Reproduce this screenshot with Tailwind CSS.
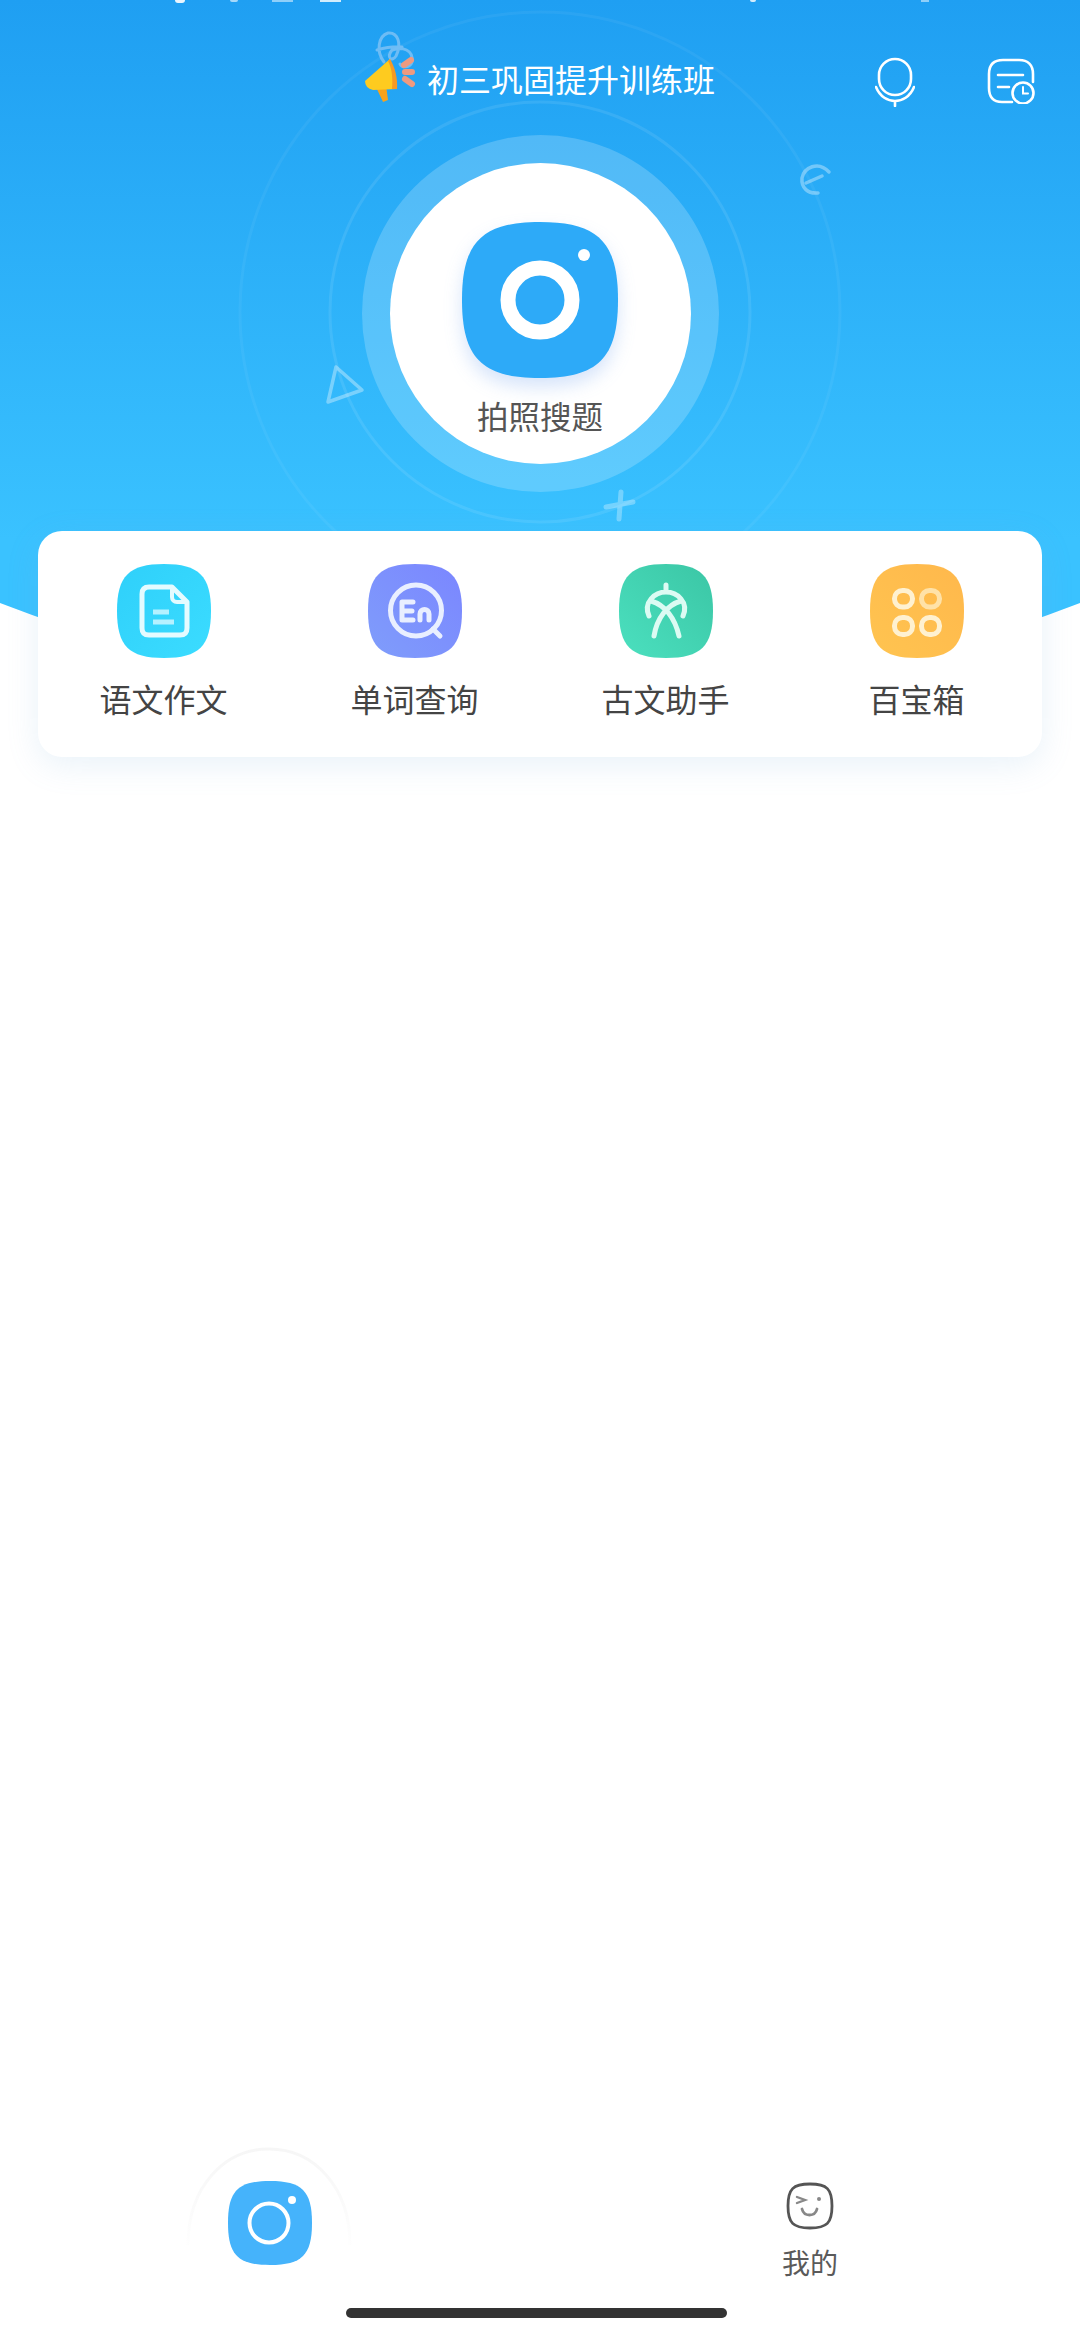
<!DOCTYPE html>
<html lang="zh-CN">
<head>
    <meta charset="UTF-8">
    <meta name="viewport" content="width=device-width, initial-scale=1.0">
    <title>拍照搜题</title>
    <script src="https://cdn.jsdelivr.net/npm/@tailwindcss/browser@4"></script>
</head>
<body class="bg-white font-['Noto_Sans_CJK_SC','Noto_Sans',sans-serif]">
<div class="relative w-[1080px] h-[2337px] overflow-hidden bg-white flex flex-col">

    <!-- Hero background + decorations -->
    <svg class="absolute left-0 top-0" width="1080" height="720" viewBox="0 0 1080 720" fill="none">
        <defs>
            <linearGradient id="hero" gradientUnits="userSpaceOnUse" x1="0" y1="0" x2="0" y2="540">
                <stop offset="0" stop-color="#1f9ff2"/>
                <stop offset="1" stop-color="#3ac2ff"/>
            </linearGradient>
        </defs>
        <path d="M0 0H1080V603Q540 811 0 603Z" fill="url(#hero)"/>
        <circle cx="540" cy="312" r="210" stroke="#fff" stroke-opacity=".09" stroke-width="3"/>
        <circle cx="540" cy="312" r="300" stroke="#fff" stroke-opacity=".05" stroke-width="3"/>
        <path d="M336 367L362 390 328 402Z" stroke="#fff" stroke-opacity=".35" stroke-width="3.5" stroke-linejoin="round"/>
        <path d="M829 172C818 160 804 168 802 178 801 188 808 194 818 193M806 183L822 176" stroke="#fff" stroke-opacity=".35" stroke-width="3.5" stroke-linecap="round"/>
        <path d="M621 492L619 519M606 507L633 502" stroke="#fff" stroke-opacity=".3" stroke-width="5" stroke-linecap="round"/>
        <path d="M384 62C376 52 378 36 388 33 398 32 402 44 396 56 392 62 386 58 392 50 402 46 414 50 412 62 410 68 402 68 400 64M377 50C384 48 392 46 402 47" stroke="#8fc7f5" stroke-opacity=".7" stroke-width="3" stroke-linecap="round"/>
    </svg>

    <!-- Status bar remnants, cut by the top edge -->
    <div class="relative h-[4px] flex items-start">
        <span class="absolute left-[175px] top-0 w-[10px] h-[3px] rounded-b-full bg-white/90"></span>
        <span class="absolute left-[230px] top-0 w-[8px] h-[2px] rounded-b-full bg-white/60"></span>
        <span class="absolute left-[272px] top-0 w-[21px] h-[2px] bg-white/50"></span>
        <span class="absolute left-[320px] top-0 w-[21px] h-[2px] bg-white/80"></span>
        <span class="absolute left-[750px] top-0 w-[6px] h-[2px] rounded-b-full bg-white/80"></span>
        <span class="absolute left-[921px] top-0 w-[8px] h-[2px] bg-white/50"></span>
    </div>

    <!-- Header -->
    <header class="relative h-[152px] pl-[365px] pr-[45px] pb-[4px] flex items-center text-white">
        <svg class="w-[52px] h-[46px] mt-[4px]" viewBox="0 0 52 46" fill="none">
            <path d="M11 30L18 45 23 43 21 28Z" fill="#f6a21e"/>
            <path d="M0 24L25 2 32 32 8 33Q0 31 0 24Z" fill="#fecb1f"/>
            <path d="M25 2C30 10 33 22 32 32L27 32C28 22 27 11 23 4Z" fill="#f59a23"/>
            <path d="M39 8L46 3M40 15L47 15M40 22L47 27" stroke="#ee9a80" stroke-width="6" stroke-linecap="round"/>
        </svg>
        <span class="ml-[10px] text-[32px] leading-[44px]">初三巩固提升训练班</span>
        <svg class="ml-auto mt-[8px] w-[40px] h-[50px]" viewBox="0 0 40 50" fill="none" stroke="#fff" stroke-width="2.6" stroke-linecap="round">
            <rect x="4" y="2" width="32" height="36" rx="16"/>
            <path d="M1 30C5 40 13 44 20 44 27 44 35 40 39 30M20 44V49"/>
        </svg>
        <svg class="ml-[72px] mt-[5px] w-[48px] h-[46px]" viewBox="0 0 48 46" fill="none" stroke="#fff" stroke-width="2.6" stroke-linecap="round">
            <path d="M25 44H15C6 44 2 39 2 30V16C2 6 7 2 16 2H32C41 2 46 7 46 16V24"/>
            <path d="M11 17H36M11 29H22"/>
            <circle cx="36" cy="35" r="10.5"/>
            <path d="M36 29V35.5H41" stroke-width="2"/>
        </svg>
    </header>

    <!-- Camera button -->
    <section class="relative flex justify-center">
        <div class="mt-[7px] w-[301px] h-[301px] rounded-full bg-white ring-[28px] ring-white/20 flex flex-col items-center">
            <svg class="mt-[59px] w-[156px] h-[156px] drop-shadow-[0_9px_9px_rgba(70,130,230,0.22)]" viewBox="0 0 156 156">
                <path d="M78 0C136 0 156 20 156 78S136 156 78 156 0 136 0 78 20 0 78 0Z" fill="#2daaf8"/>
                <circle cx="78" cy="78" r="32" fill="none" stroke="#fff" stroke-width="15"/>
                <circle cx="122" cy="33" r="6" fill="#fff"/>
            </svg>
            <span class="mt-[15px] text-[31.5px] leading-[44px] text-[#555]">拍照搜题</span>
        </div>
    </section>

    <!-- Tool card -->
    <section class="relative mt-[67px] mx-[38px] h-[226px] rounded-[24px] bg-white shadow-[0_8px_32px_rgba(120,175,215,0.16)] grid grid-cols-4 text-[32px] leading-[44px] text-[#444]">
        <div class="flex flex-col items-center pt-[33px]">
            <svg class="w-[94px] h-[94px]" viewBox="0 0 94 94" fill="none">
                <defs><linearGradient id="g1" x1="0" y1="0" x2="1" y2="1"><stop offset="0" stop-color="#2fd0fa"/><stop offset="1" stop-color="#3bdcff"/></linearGradient></defs>
                <path d="M47 0C82 0 94 12 94 47S82 94 47 94 0 82 0 47 12 0 47 0Z" fill="url(#g1)"/>
                <path d="M55 23H32C27 23 25 26 25 30V64C25 69 27 71 32 71H63C68 71 70 69 70 64V38Z" stroke="#e4fbff" stroke-width="5" stroke-linejoin="round"/>
                <path d="M55 23V33C55 36 57 38 60 38H70" stroke="#e4fbff" stroke-width="4" stroke-linejoin="round"/>
                <path d="M36 48H52M36 58H57" stroke="#b5f1ff" stroke-width="5"/>
            </svg>
            <span class="mt-[18px]">语文作文</span>
        </div>
        <div class="flex flex-col items-center pt-[33px]">
            <svg class="w-[94px] h-[94px]" viewBox="0 0 94 94" fill="none">
                <defs><linearGradient id="g2" x1="0" y1="1" x2="1" y2="0"><stop offset="0" stop-color="#7f9dfb"/><stop offset="1" stop-color="#7b86ff"/></linearGradient></defs>
                <path d="M47 0C82 0 94 12 94 47S82 94 47 94 0 82 0 47 12 0 47 0Z" fill="url(#g2)"/>
                <circle cx="48" cy="46.5" r="25.5" stroke="#e9efff" stroke-width="5"/>
                <path d="M65 65L72 72" stroke="#e9efff" stroke-width="5" stroke-linecap="round"/>
                <path d="M45 38H34V56H45M34 47H44" stroke="#e9efff" stroke-width="5" stroke-linecap="round" stroke-linejoin="round"/>
                <path d="M52 56V50C52 44 61 44 61 50V56" stroke="#e9efff" stroke-width="5" stroke-linecap="round"/>
            </svg>
            <span class="mt-[18px]">单词查询</span>
        </div>
        <div class="flex flex-col items-center pt-[33px]">
            <svg class="w-[94px] h-[94px]" viewBox="0 0 94 94" fill="none">
                <defs><linearGradient id="g3" x1="0" y1="1" x2="1" y2="0"><stop offset="0" stop-color="#4be0bf"/><stop offset="1" stop-color="#3bc6a5"/></linearGradient></defs>
                <path d="M47 0C82 0 94 12 94 47S82 94 47 94 0 82 0 47 12 0 47 0Z" fill="url(#g3)"/>
                <g stroke="#dcfbf3" stroke-width="5" stroke-linecap="round">
                    <path d="M47 21V28M30 52C24 38 36 28 47 28 58 28 70 38 64 52"/>
                    <path d="M32 37C46 41 56 54 60 72M62 37C48 41 38 54 35 72"/>
                </g>
            </svg>
            <span class="mt-[18px]">古文助手</span>
        </div>
        <div class="flex flex-col items-center pt-[33px]">
            <svg class="w-[94px] h-[94px]" viewBox="0 0 94 94" fill="none">
                <defs><linearGradient id="g4" x1="0" y1="1" x2="1" y2="0"><stop offset="0" stop-color="#ffc450"/><stop offset="1" stop-color="#ffb84c"/></linearGradient></defs>
                <path d="M47 0C82 0 94 12 94 47S82 94 47 94 0 82 0 47 12 0 47 0Z" fill="url(#g4)"/>
                <g stroke="#fff1d0" stroke-width="5">
                    <rect x="24.5" y="26.5" width="18" height="16.5" rx="8"/>
                    <rect x="51.5" y="26.5" width="18" height="16.5" rx="8" stroke="#ffe2a8"/>
                    <rect x="24.5" y="53.5" width="18" height="17" rx="8"/>
                    <rect x="51.5" y="53.5" width="18" height="17" rx="8"/>
                </g>
            </svg>
            <span class="mt-[18px]">百宝箱</span>
        </div>
    </section>

    <!-- Bottom tab bar -->
    <nav class="relative mt-auto h-[190px] grid grid-cols-2">
        <div class="relative">
            <svg class="absolute left-[186px] top-[0px] w-[166px] h-[100px]" viewBox="0 0 166 100" fill="none">
                <defs><linearGradient id="tabRing" x1="0" y1="0" x2="0" y2="1"><stop offset="0" stop-color="#f6f6f6"/><stop offset="1" stop-color="#fefefe"/></linearGradient></defs>
                <path d="M2 98C2 40 38 2 83 2 128 2 164 40 164 98" stroke="url(#tabRing)" stroke-width="3"/>
            </svg>
            <svg class="absolute left-[228px] top-[34px] w-[84px] h-[84px]" viewBox="0 0 84 84">
                <path d="M42 0C74 0 84 10 84 42S74 84 42 84 0 74 0 42 10 0 42 0Z" fill="#45b3fb"/>
                <circle cx="41" cy="42" r="19.5" fill="none" stroke="#fff" stroke-width="4"/>
                <circle cx="64" cy="19" r="4" fill="#fff"/>
            </svg>
        </div>
        <div class="flex flex-col items-center pt-[35px]">
            <svg class="w-[48px] h-[48px]" viewBox="0 0 48 48" fill="none" stroke="#555" stroke-linecap="round">
                <path d="M24 2C41 2 46 7 46 24S41 46 24 46 2 41 2 24 7 2 24 2Z" stroke-width="2.8"/>
                <path d="M11 15L19 18 11 21" stroke="#888" stroke-width="2.4"/>
                <circle cx="33" cy="17" r="2" fill="#888" stroke="none"/>
                <path d="M16 27C18 35 29 35 31 27" stroke="#888" stroke-width="2.8"/>
            </svg>
            <span class="mt-[14px] text-[28px] leading-[36px] text-[#5a5a5a]">我的</span>
        </div>
        <div class="absolute left-[346px] bottom-[19px] w-[381px] h-[10px] rounded-full bg-[#333]"></div>
    </nav>
</div>
</body>
</html>
